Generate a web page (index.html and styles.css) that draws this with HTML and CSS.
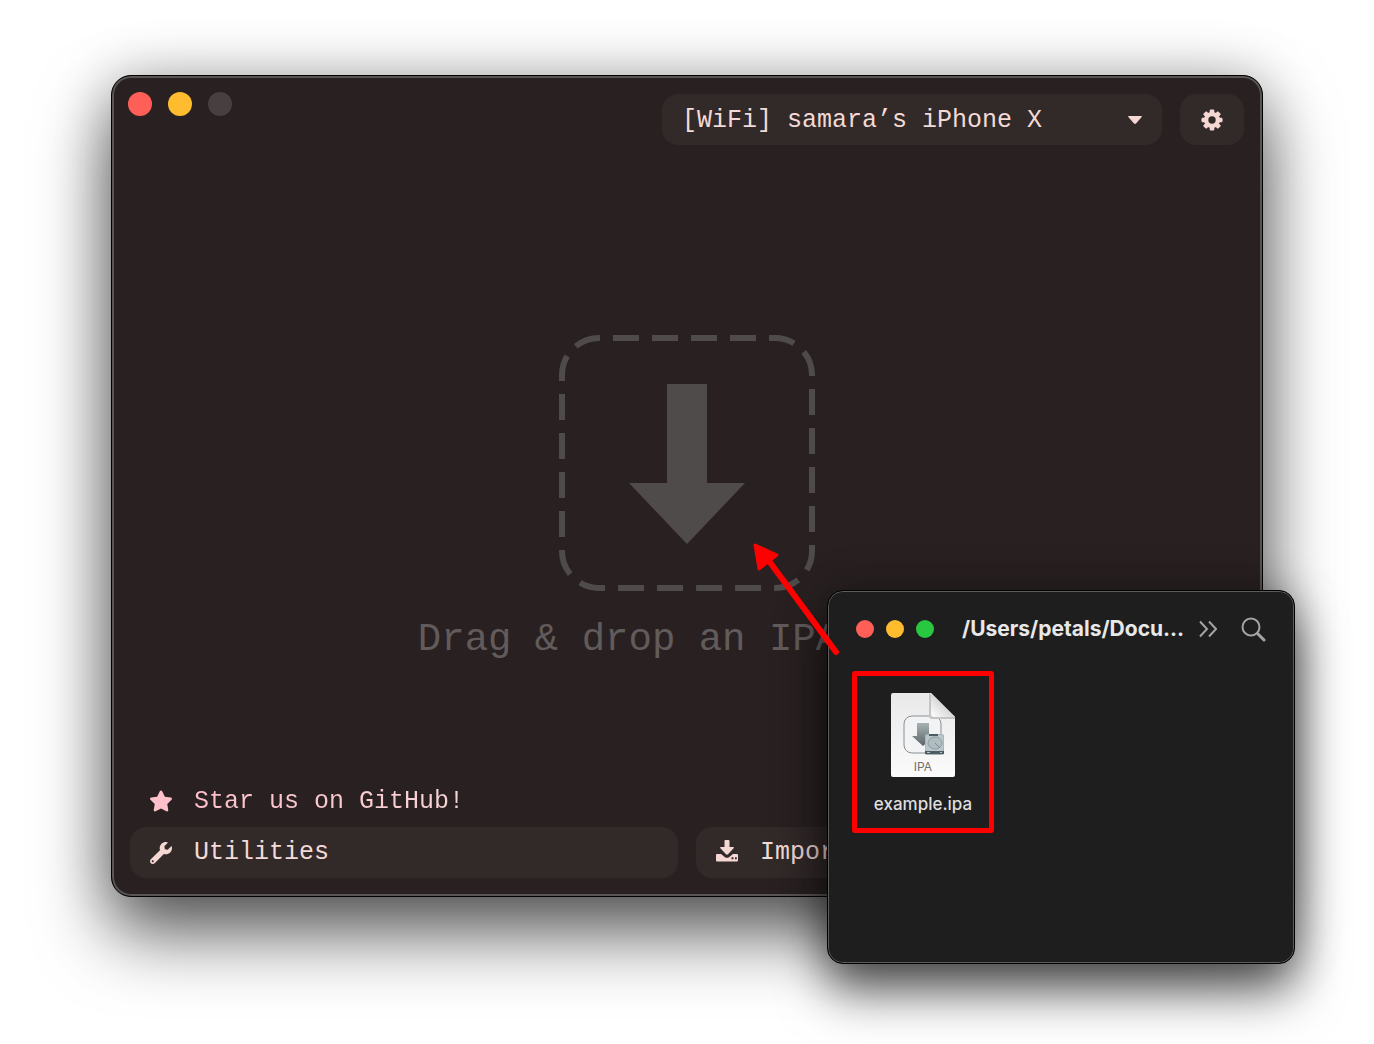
FILE: index.html
```html
<!DOCTYPE html>
<html lang="en">
<head>
<meta charset="utf-8">
<meta name="viewport" content="width=device-width, initial-scale=1.0">
<title>Drag &amp; drop an IPA</title>
<link rel="stylesheet" href="styles.css">
</head>
<body>
<div class="desktop">
    <main class="app-window">
        <header class="topbar">
            <div class="lights">
                <button class="light red" aria-label="Close"></button>
                <button class="light yellow" aria-label="Minimize"></button>
                <button class="light disabled" aria-label="Zoom" disabled></button>
            </div>
            <div class="controls">
                <div class="device-picker">
                    <select class="device-select" aria-label="Device">
                        <option>[WiFi] samara’s iPhone X</option>
                    </select>
                    <svg class="caret" viewBox="0 0 14 8" aria-hidden="true"><path d="M1 0h12q1.500 0 .7 1L8 7.500q-1 .8-2 0L.3 1Q-.5 0 1 0z"/></svg>
                </div>
                <button class="btn settings-btn" aria-label="Settings">
                    <svg class="icon" viewBox="-11 -11 22 22" aria-hidden="true">
                        <g id="teeth">
                            <rect x="-2.300" y="-10.500" width="4.600" height="21" rx="1"/>
                            <rect x="-10.500" y="-2.300" width="21" height="4.600" rx="1"/>
                        </g>
                        <use href="#teeth" transform="rotate(45)"/>
                        <circle r="8"/>
                        <circle class="gear-hole" r="3.700"/>
                    </svg>
                </button>
            </div>
        </header>

        <section class="dropzone">
            <svg class="drop-icon" viewBox="0 0 256 256" aria-hidden="true">
                <rect class="drop-border" x="3" y="3" width="250" height="250" rx="37"/>
                <path class="drop-arrow" d="M108 49h40v99h38l-58 61-58-61h38z"/>
            </svg>
            <p class="drop-text">Drag &amp; drop an IPA file</p>
        </section>

        <footer class="actions">
            <a class="star-link" href="#">
                <svg class="icon" viewBox="20 0 536 512" aria-hidden="true"><path d="M259.3 17.8L194 150.2 47.9 171.5c-26.2 3.800-36.700 36.100-17.700 54.600l105.700 103-25 145.500c-4.500 26.300 23.200 46 46.400 33.700L288 439.600l130.700 68.700c23.200 12.200 50.900-7.400 46.400-33.700l-25-145.500 105.700-103c19-18.500 8.500-50.800-17.700-54.600L382 150.200 316.700 17.800c-11.700-23.600-45.600-23.900-57.400 0z"/></svg>
                <span class="star-label">Star us on GitHub!</span>
            </a>
            <button class="btn">
                <svg class="icon" viewBox="0 0 512 512" aria-hidden="true"><path d="M507.730 109.100c-2.240-9.030-13.540-12.090-20.120-5.510l-74.360 74.360-67.880-11.310-11.310-67.880 74.360-74.360c6.620-6.620 3.430-17.900-5.660-20.160-47.380-11.740-99.550.91-136.580 37.930-39.640 39.640-50.550 97.100-34.050 147.200L18.740 402.760c-24.990 24.990-24.990 65.510 0 90.500 24.990 24.990 65.510 24.990 90.500 0l213.210-213.210c50.120 16.710 107.470 5.680 147.370-34.220 37.070-37.070 49.700-89.320 37.910-136.730zM64 472c-13.250 0-24-10.750-24-24 0-13.260 10.750-24 24-24s24 10.740 24 24c0 13.250-10.750 24-24 24z"/></svg>
                Utilities
            </button>
            <button class="btn">
                <svg class="icon" viewBox="0 2 22 22" aria-hidden="true"><path fill-rule="evenodd" d="M9.500 0h3q1 0 1 1v6h3.500q1.600 0 .6 1.200l-5.600 6q-1 .9-2 0l-5.600-6Q3.400 7 5 7h3.500V1q0-1 1-1zM1 14h4l4 3.200q2 1.300 4 0l4-3.200h4q1 0 1 1v5.500q0 1-1 1H1q-1 0-1-1V15q0-1 1-1zM15.500 17.200v2h2v-2zM19 17.200v2h1.800v-2z"/></svg>
                Import IPA
            </button>
        </footer>
    </main>

    <section class="finder-window">
        <header class="finder-bar">
            <div class="lights">
                <button class="light red" aria-label="Close"></button>
                <button class="light yellow" aria-label="Minimize"></button>
                <button class="light green" aria-label="Zoom"></button>
            </div>
            <h2 class="finder-title">/Users/petals/Docu...</h2>
            <div class="tools">
                <button class="tool" aria-label="More">
                    <svg class="more-icon" viewBox="0 0 18 18" aria-hidden="true"><path d="M1 1.500L8 9l-7 7.500M10 1.500L17 9l-7 7.500"/></svg>
                </button>
                <button class="tool" aria-label="Search">
                    <svg class="search-icon" viewBox="0 0 25 25" aria-hidden="true"><circle cx="10" cy="10" r="8.500"/><path class="handle" d="M16.500 16.500L23 23"/></svg>
                </button>
            </div>
        </header>
        <figure class="file">
            <svg class="file-icon" viewBox="0 0 64 84" aria-hidden="true">
                <defs>
                    <linearGradient id="paper" x1="0" y1="0" x2="0" y2="1"><stop offset="0" stop-color="#e9e9e9"/><stop offset="1" stop-color="#fbfbfb"/></linearGradient>
                    <linearGradient id="fold" x1="0" y1="1" x2="1" y2="0"><stop offset="0" stop-color="#fff"/><stop offset=".5" stop-color="#d8d8d8"/></linearGradient>
                    <linearGradient id="arrow" x1="0" y1="0" x2="0" y2="1"><stop offset="0" stop-color="#a9b2b3"/><stop offset="1" stop-color="#59656a"/></linearGradient>
                </defs>
                <path fill="url(#paper)" d="M2 0h38l24 24v58q0 2-2 2H2q-2 0-2-2V2q0-2 2-2z"/>
                <rect x="13" y="23" width="37" height="37" rx="8" fill="#f1f3f4" stroke="#8b8e90"/>
                <path fill="#c4c4c4" d="M38 0v23q0 3 3 3h23v-2z"/>
                <path fill="url(#fold)" d="M40 0l24 24H43q-3 0-3-3z"/>
                <path fill="url(#arrow)" d="M26 30h12v13h5L32 53 21 43h5z"/>
                <rect x="34" y="41" width="19" height="21" rx="2" fill="#a8b5b9"/>
                <rect x="35" y="42" width="17" height="16" rx="2" fill="#bac6c9"/>
                <ellipse cx="44" cy="50" rx="7" ry="6" fill="#afbcc0" stroke="#8c9da3"/>
                <path stroke="#7b8b90" d="M44 50l5 5"/>
                <path fill="#4d5c62" d="M34 58h19v3H34zM38 41h9v2h-9z"/>
                <path fill="#b5c1c4" d="M36 59h3v1h-3zM49 59h2v1h-2z"/>
                <text class="file-type" x="32" y="78" text-anchor="middle">IPA</text>
            </svg>
            <figcaption class="file-name">example.ipa</figcaption>
        </figure>
        <svg class="drag-arrow" viewBox="0 0 90 115" aria-hidden="true">
            <path class="shaft" d="M22 25l67 91"/>
            <path class="head" d="M8 9l22 10-18 14z"/>
        </svg>
    </section>
</div>
</body>
</html>
```
FILE: styles.css
```css
* {
    box-sizing: border-box;
}
body {
    margin: 0;
    background-color: #fff;
    font-family: 'Liberation Mono', monospace;
    color: #f2dad7;
}
button {
    border: none;
    padding: 0;
    background: none;
    font: inherit;
    color: inherit;
    cursor: pointer;
}
.desktop {
    position: relative;
    display: flex;
    min-height: 100vh;
    padding: 75px 111px 147px;
    overflow: hidden;
}

/* main window */
.app-window {
    flex: 1;
    display: flex;
    flex-direction: column;
    background-color: #292121;
    border: 1px solid #000;
    border-radius: 20px;
    box-shadow: inset 0 0 0 2px #5a5555, 0 36px 72px rgba(0, 0, 0, 0.64), 0 0 56px rgba(0, 0, 0, 0.22);
}
.topbar {
    display: flex;
    justify-content: space-between;
    align-items: flex-start;
    padding: 16px 18px 0 16px;
}
.lights {
    display: flex;
    gap: 16px;
}
.light {
    width: 24px;
    height: 24px;
    border-radius: 50%;
}
.red {
    background-color: #ff5f57;
}
.yellow {
    background-color: #febc2e;
}
.green {
    background-color: #28c840;
}
.disabled {
    background-color: #484040;
}
.controls {
    display: flex;
    gap: 18px;
    padding-top: 2px;
}
.device-picker {
    position: relative;
}
.device-select {
    appearance: none;
    width: 500px;
    height: 51px;
    padding: 2px 50px 0 20px;
    border: none;
    border-radius: 16px;
    background-color: #322929;
    font: inherit;
    font-size: 25px;
    color: inherit;
}
.caret {
    position: absolute;
    right: 20px;
    top: 22px;
    width: 14px;
    height: 8px;
    fill: #f5d8d4;
    pointer-events: none;
}
.btn {
    display: flex;
    align-items: center;
    gap: 22px;
    height: 51px;
    padding: 0 20px;
    border-radius: 16px;
    background-color: #322929;
    font-size: 25px;
}
.settings-btn {
    width: 64px;
    justify-content: center;
}
.icon {
    flex: none;
    width: 22px;
    height: 22px;
    fill: #f5d8d4;
    overflow: visible;
}
.gear-hole {
    fill: #322929;
}

/* drop area */
.dropzone {
    flex: 1;
    display: flex;
    flex-direction: column;
    align-items: center;
    padding: 190px 20px 0;
}
.drop-icon {
    width: 256px;
    height: 256px;
}
.drop-border {
    fill: none;
    stroke: #4f4b4a;
    stroke-width: 6;
    stroke-dasharray: 26 13;
    stroke-dashoffset: -14;
}
.drop-arrow {
    fill: #4f4b4a;
}
.drop-text {
    margin: 26px 0 0;
    font-size: 39px;
    line-height: 46px;
    color: #625b5b;
}

/* bottom buttons */
.actions {
    display: grid;
    grid-template-columns: 1fr 1fr;
    column-gap: 18px;
    padding: 0 18px 18px;
}
.star-link {
    grid-column: 1 / -1;
    display: flex;
    align-items: center;
    gap: 22px;
    height: 52px;
    padding: 0 20px;
    font-size: 25px;
    text-decoration: none;
}
.star-link .icon {
    fill: #ffc0cb;
}
.star-label {
    background: linear-gradient(90deg, #ffc0cb, #f5d3d4);
    background-clip: text;
    color: transparent;
}

/* finder window */
.finder-window {
    position: absolute;
    right: 79px;
    bottom: 80px;
    width: 468px;
    min-height: 374px;
    background-color: #1e1e1e;
    border: 1px solid #000;
    border-radius: 16px;
    box-shadow: inset 0 0 0 1px #5c5c5c, 0 28px 50px rgba(0, 0, 0, 0.6), 0 0 44px rgba(0, 0, 0, 0.28);
    font-family: Inter, sans-serif;
}
.finder-bar {
    display: flex;
    align-items: center;
    padding: 24px 28px 0;
}
.finder-bar .lights {
    gap: 12px;
}
.finder-bar .light {
    width: 18px;
    height: 18px;
}
.finder-title {
    margin: 0 0 0 28px;
    font-size: 21px;
    line-height: 28px;
    font-weight: 700;
    white-space: nowrap;
    color: #e8e8e8;
}
.tools {
    display: flex;
    align-items: center;
    gap: 24px;
    margin-left: auto;
}
.tool {
    display: flex;
}
.tool svg {
    fill: none;
    stroke: #a3a3a3;
    stroke-width: 2;
}
.more-icon {
    width: 18px;
    height: 18px;
}
.search-icon {
    width: 25px;
    height: 25px;
}
.search-icon .handle {
    stroke-width: 3;
    stroke-linecap: round;
}
.file {
    display: flex;
    flex-direction: column;
    align-items: center;
    gap: 16px;
    width: 142px;
    height: 162px;
    margin: 28px 0 0 24px;
    padding-top: 17px;
    border: 5px solid #ff0000;
    border-radius: 3px;
}
.file-icon {
    width: 64px;
    height: 84px;
}
.file-type {
    font-family: Inter, sans-serif;
    font-size: 12px;
    fill: #707070;
}
.file-name {
    font-size: 17px;
    line-height: 22px;
    font-weight: 500;
    color: #dedede;
}
.drag-arrow {
    position: absolute;
    left: -81px;
    top: -55px;
    width: 90px;
    height: 115px;
    overflow: visible;
}
.shaft {
    fill: none;
    stroke: #ff0000;
    stroke-width: 6;
    stroke-linecap: round;
}
.head {
    fill: #ff0000;
    stroke: #ff0000;
    stroke-width: 3;
    stroke-linejoin: round;
}
```
